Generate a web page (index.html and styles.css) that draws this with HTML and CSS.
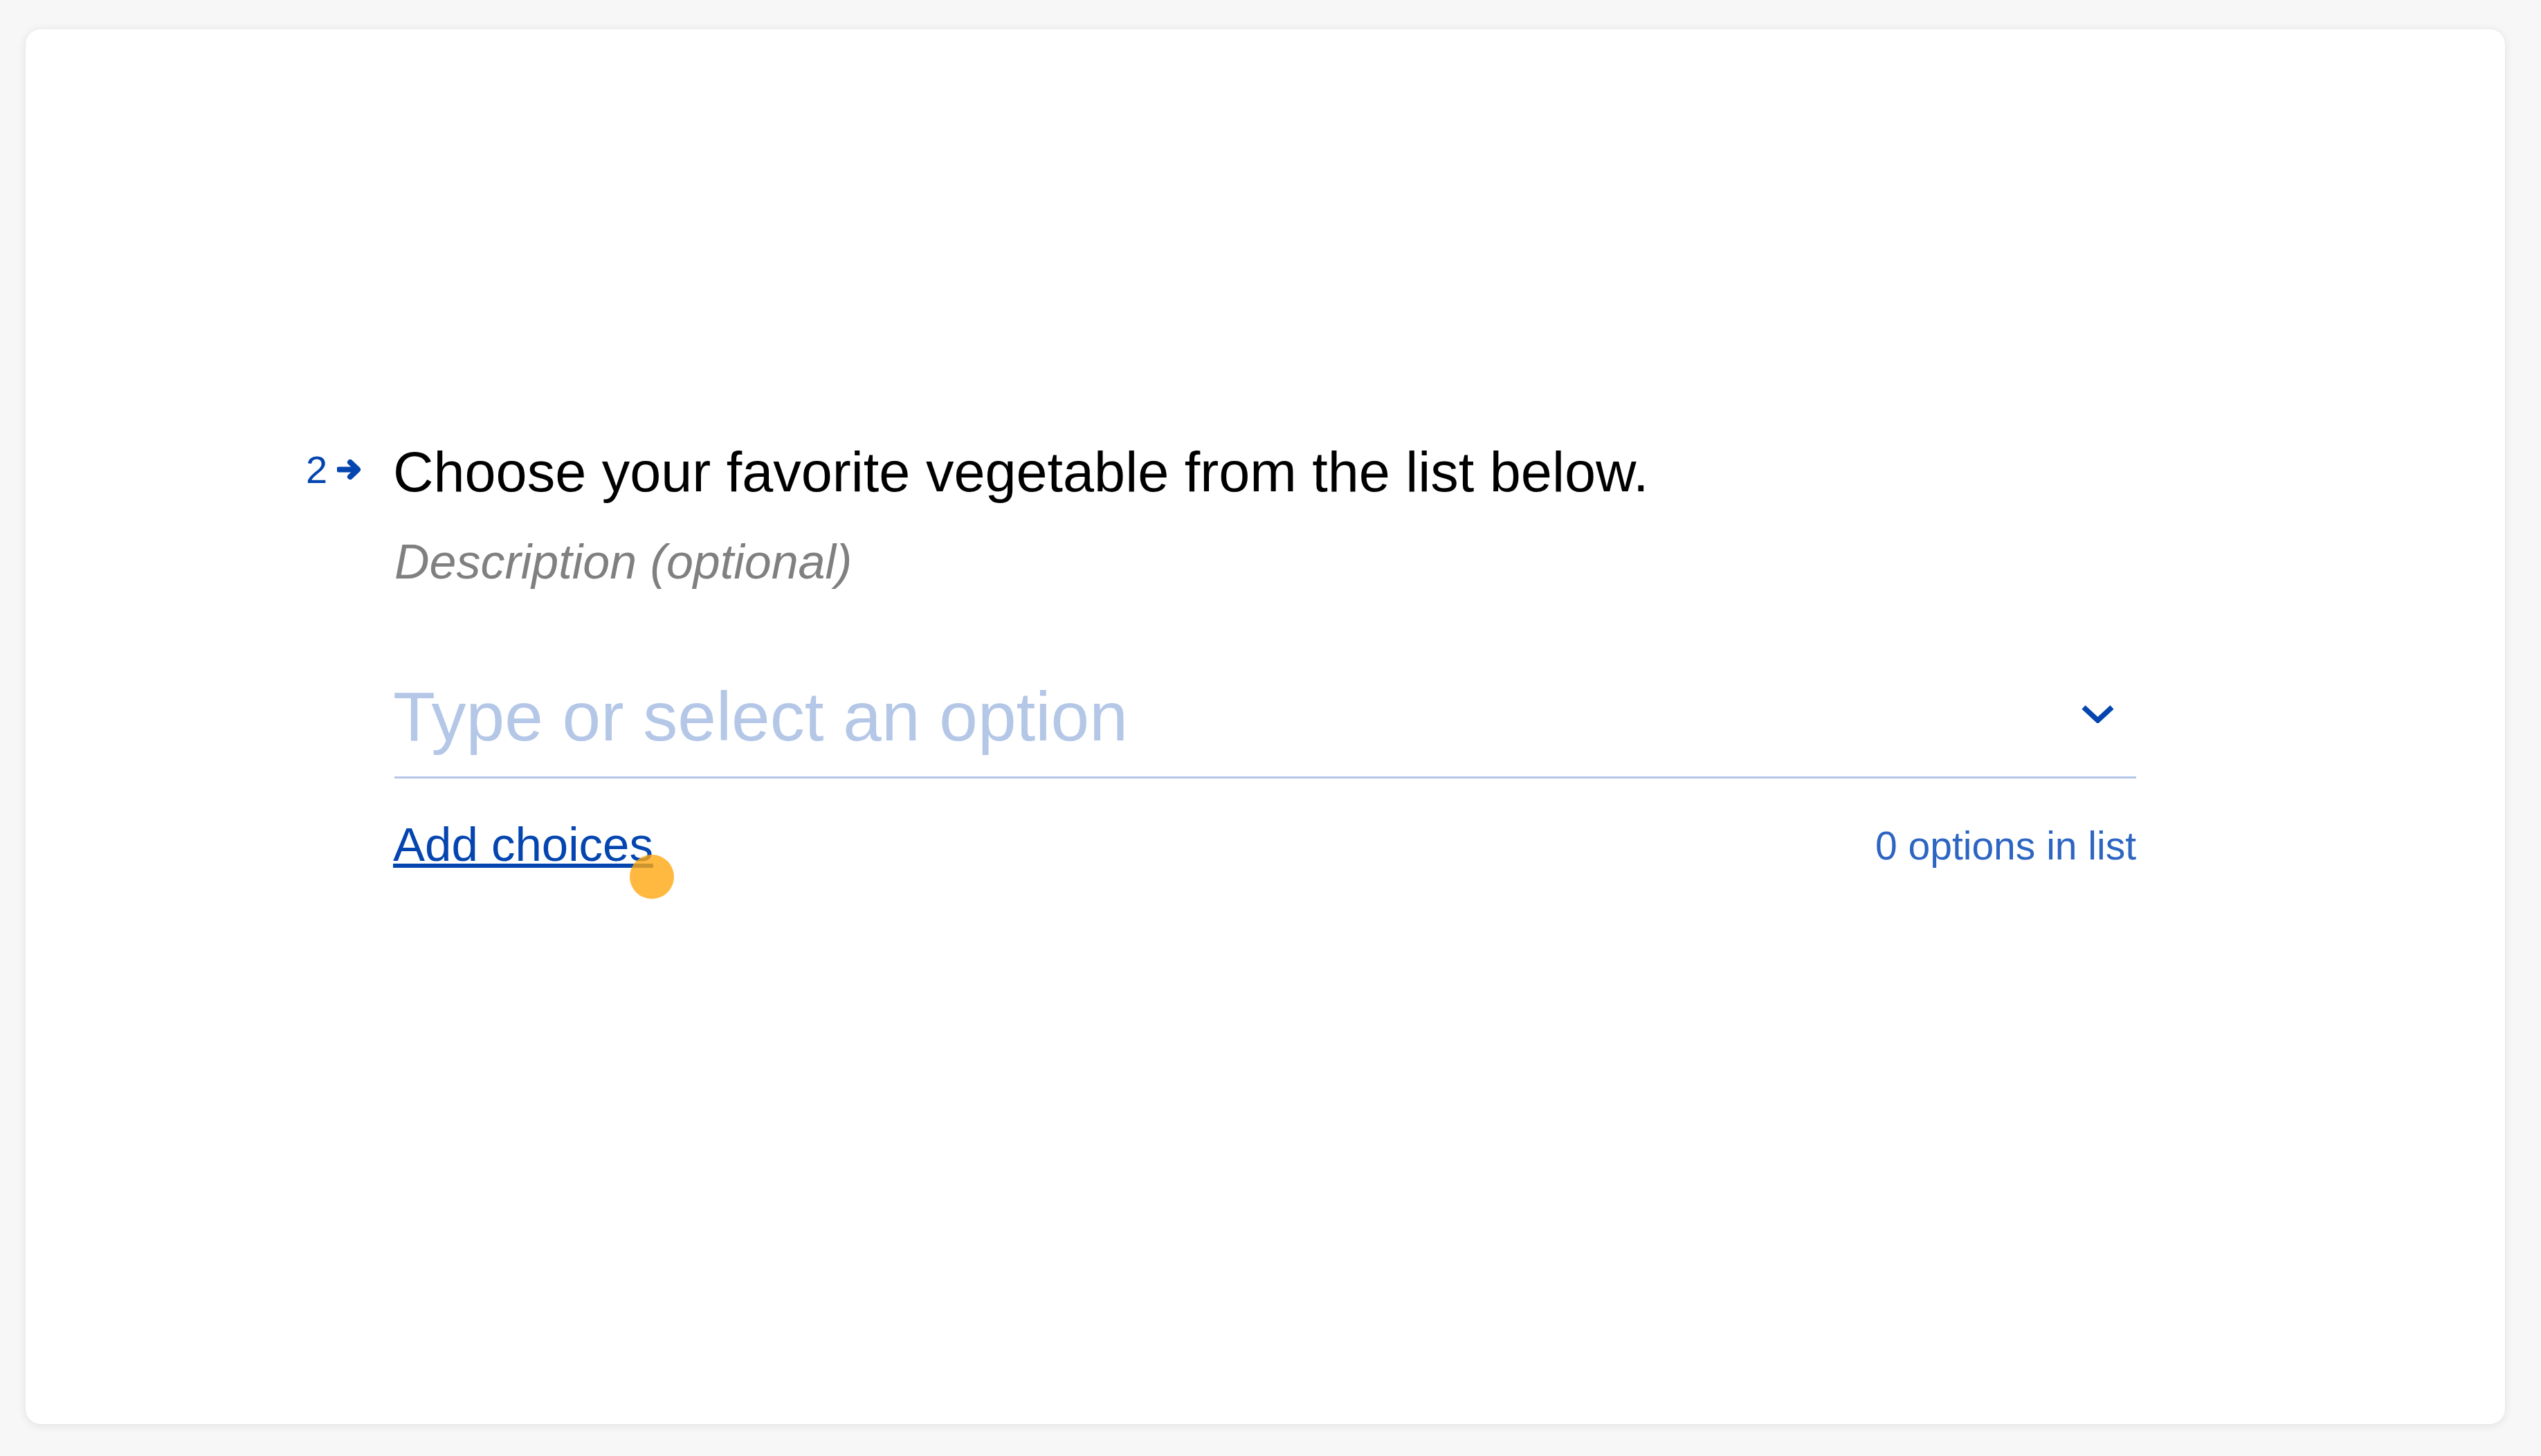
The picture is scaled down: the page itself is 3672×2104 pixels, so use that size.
FILE: index.html
```html
<!DOCTYPE html>
<html lang="en">
<head>
<meta charset="utf-8">
<title>Dropdown question</title>
<link rel="stylesheet" href="styles.css">
</head>
<body>
<div class="page">
  <div class="card">
    <div class="question">
      <div class="title-row">
        <div class="qnum">
          <span class="qnum-text">2</span>
          <svg class="qarrow" viewBox="0 0 36 31" width="36" height="31" aria-hidden="true">
            <path d="M3 15.5 H29" stroke="#0445af" stroke-width="8" stroke-linecap="round" fill="none"/>
            <path d="M19 5 L30 15.5 L19 26" stroke="#0445af" stroke-width="8" stroke-linecap="round" stroke-linejoin="round" fill="none"/>
          </svg>
        </div>
        <div class="title">Choose your favorite vegetable from the list below.</div>
      </div>
      <div class="description">Description (optional)</div>
      <div class="dropdown">
        <div class="placeholder">Type or select an option</div>
        <svg class="chevron" viewBox="0 0 47 27" width="47" height="27" aria-hidden="true">
          <path d="M3 4 L23.5 23 L44 4" stroke="#0445af" stroke-width="7.5" fill="none" stroke-linejoin="miter"/>
        </svg>
      </div>
      <div class="footer-row">
        <span class="add-link">Add choices<span class="cursor-dot"></span></span>
        <span class="count">0 options in list</span>
      </div>
    </div>
  </div>
</div>
</body>
</html>
```

FILE: styles.css
```css
html, body {
  margin: 0;
  padding: 0;
}

body {
  background: #f7f7f7;
  font-family: "Liberation Sans", Arial, Helvetica, sans-serif;
}

.page {
  box-sizing: border-box;
  height: 2104px;
  padding: 42px 52px 46px 37px;
}

.card {
  box-sizing: border-box;
  height: 100%;
  background: #ffffff;
  border-radius: 22px;
  box-shadow: 0 2px 14px rgba(0, 0, 0, 0.09), 0 0 2px rgba(0, 0, 0, 0.05);
  padding-top: 592px;
}

.question {
  width: 2517px;
  margin: 0 auto;
}

.title-row {
  display: flex;
  align-items: flex-start;
  margin-left: -128px;
}

.qnum {
  display: flex;
  align-items: center;
  gap: 14px;
  width: 128px;
  height: 89px;
  flex: none;
  color: #0445af;
}

.qnum-text {
  font-size: 56px;
  line-height: 89px;
}

.qarrow {
  display: block;
}

.title {
  font-size: 81px;
  line-height: 96px;
  color: #000000;
  margin-left: -2px;
}

.description {
  margin-top: 40px;
  font-size: 70px;
  line-height: 84px;
  font-style: italic;
  color: #808080;
}

.dropdown {
  display: flex;
  align-items: flex-start;
  justify-content: space-between;
  margin-top: 121px;
  padding-bottom: 27px;
  border-bottom: 3px solid #b4c7e7;
}

.placeholder {
  font-size: 100px;
  line-height: 120px;
  color: #b4c7e7;
  margin-left: -2px;
}

.chevron {
  display: block;
  margin-top: 43px;
  margin-right: 32px;
}

.footer-row {
  display: flex;
  justify-content: space-between;
  align-items: flex-start;
  margin-top: 54px;
}

.add-link {
  position: relative;
  font-size: 69px;
  line-height: 83px;
  color: #0445af;
  text-decoration: underline;
  text-decoration-thickness: 6px;
  text-underline-offset: 4px;
  margin-left: -2px;
}

.cursor-dot {
  position: absolute;
  left: calc(100% - 34px);
  top: 56px;
  width: 64px;
  height: 64px;
  border-radius: 50%;
  background: rgba(255, 168, 16, 0.8);
}

.count {
  margin-top: 9px;
  font-size: 57px;
  line-height: 68px;
  color: #2d65c2;
}
```
